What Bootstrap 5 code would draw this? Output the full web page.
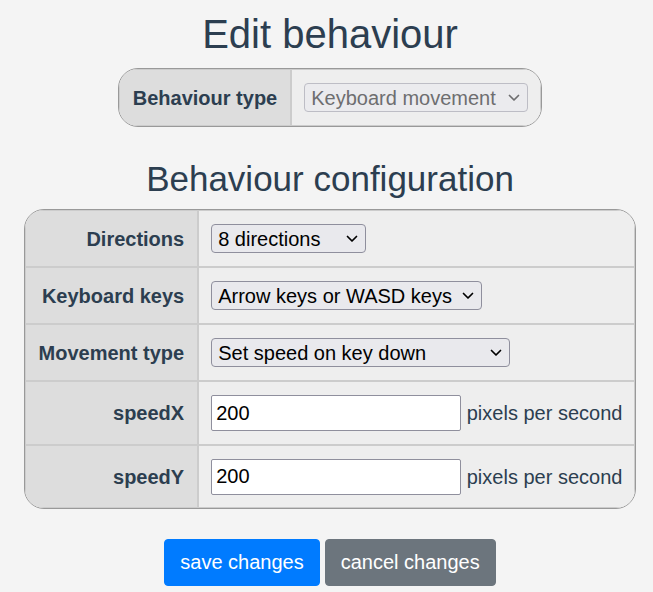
<!DOCTYPE html>
<html lang="en">
<head>
<meta charset="utf-8">
<meta name="viewport" content="width=device-width, initial-scale=1">
<title>Edit behaviour</title>
<link href="https://cdn.jsdelivr.net/npm/bootstrap@5.3.0/dist/css/bootstrap.min.css" rel="stylesheet">
<style>
  body {
    font-family: "Liberation Sans", Arial, sans-serif;
    font-size: 20px;
    line-height: 30px;
    color: #2c3e50;
    background: #f4f4f4;
  }
  .editor { padding: 10px 0 6px 7px; }
  .editor h1, .editor h2 { font-weight: 400; margin: 0; }
  .editor h1 { font-size: 40px; line-height: 48px; margin-bottom: 10px; }
  .editor h2 { font-size: 35px; line-height: 44px; margin-bottom: 8px; }
  .editor .section-gap { margin-top: 30px; }
  .panel { border: 1px solid #999; border-radius: 20px; overflow: hidden; }
  .settings { border-collapse: separate; border-spacing: 0; }
  .settings th, .settings td {
    height: 57px;
    padding: 0 12px;
    border: 1px solid #ccc;
    background: #eee;
    vertical-align: middle;
    white-space: nowrap;
  }
  .settings th { padding: 0 13px; background: #ddd; text-align: right; }
  .settings .tall th, .settings .tall td { height: 64px; }
  .settings .tall:last-child th, .settings .tall:last-child td { height: 63px; }
  .picker {
    display: block;
    height: 29px;
    padding: 2px 26px 0 6px;
    font-size: 20px;
    line-height: 25px;
    color: #000;
    border: 1px solid #8f8f9d;
    border-radius: 4px;
    background: #e9e9ed url("data:image/svg+xml,%3Csvg xmlns='http://www.w3.org/2000/svg' width='12' height='8' fill='none' stroke='%23000' stroke-width='1.700' stroke-linecap='round' stroke-linejoin='round'%3E%3Cpath d='M1.500 1.500 6 6l4.500-4.500'/%3E%3C/svg%3E") no-repeat right 7px center;
    appearance: none;
  }
  .picker:disabled {
    opacity: 1;
    color: #6e6e70;
    border-color: #bdbdc5;
    background-color: #ebebee;
    background-image: url("data:image/svg+xml,%3Csvg xmlns='http://www.w3.org/2000/svg' width='12' height='8' fill='none' stroke='%236e6e70' stroke-width='1.700' stroke-linecap='round' stroke-linejoin='round'%3E%3Cpath d='M1.500 1.500 6 6l4.500-4.500'/%3E%3C/svg%3E");
  }
  .w-type { width: 224px; }
  .w-directions { width: 155px; }
  .w-keys { width: 271px; }
  .w-movement { width: 299px; }
  .speed {
    width: 250px;
    height: 36px;
    padding: 0 4px;
    color: #000;
    background: #fff;
    border: 1px solid #8f8f9d;
    border-radius: 2px;
  }
  .editor .btn {
    --bs-btn-font-size: 20px;
    --bs-btn-line-height: 31px;
    --bs-btn-padding-x: 15px;
    --bs-btn-padding-y: 7px;
    --bs-btn-border-radius: 4px;
  }
  .btn-primary { --bs-btn-bg: #007bff; --bs-btn-border-color: #007bff; }
  .actions { gap: 5px; }
</style>
<script defer src="https://cdn.jsdelivr.net/npm/bootstrap@5.3.0/dist/js/bootstrap.bundle.min.js"></script>
</head>
<body>
<main class="editor">
  <form class="d-flex flex-column align-items-center">
    <h1>Edit behaviour</h1>
    <div class="panel">
      <table class="settings">
        <tbody>
          <tr>
            <th scope="row"><label for="type">Behaviour type</label></th>
            <td><select class="picker w-type" id="type" disabled><option>Keyboard movement</option></select></td>
          </tr>
        </tbody>
      </table>
    </div>

    <h2 class="section-gap">Behaviour configuration</h2>
    <div class="panel">
      <table class="settings">
        <tbody>
          <tr>
            <th scope="row"><label for="directions">Directions</label></th>
            <td><select class="picker w-directions" id="directions"><option>8 directions</option></select></td>
          </tr>
          <tr>
            <th scope="row"><label for="keys">Keyboard keys</label></th>
            <td><select class="picker w-keys" id="keys"><option>Arrow keys or WASD keys</option></select></td>
          </tr>
          <tr>
            <th scope="row"><label for="movement">Movement type</label></th>
            <td><select class="picker w-movement" id="movement"><option>Set speed on key down</option></select></td>
          </tr>
          <tr class="tall">
            <th scope="row"><label for="speedX">speedX</label></th>
            <td><input class="speed" id="speedX" type="text" value="200"> pixels per second</td>
          </tr>
          <tr class="tall">
            <th scope="row"><label for="speedY">speedY</label></th>
            <td><input class="speed" id="speedY" type="text" value="200"> pixels per second</td>
          </tr>
        </tbody>
      </table>
    </div>

    <div class="actions section-gap d-flex">
      <button type="button" class="btn btn-primary">save changes</button>
      <button type="button" class="btn btn-secondary">cancel changes</button>
    </div>
  </form>
</main>
</body>
</html>
